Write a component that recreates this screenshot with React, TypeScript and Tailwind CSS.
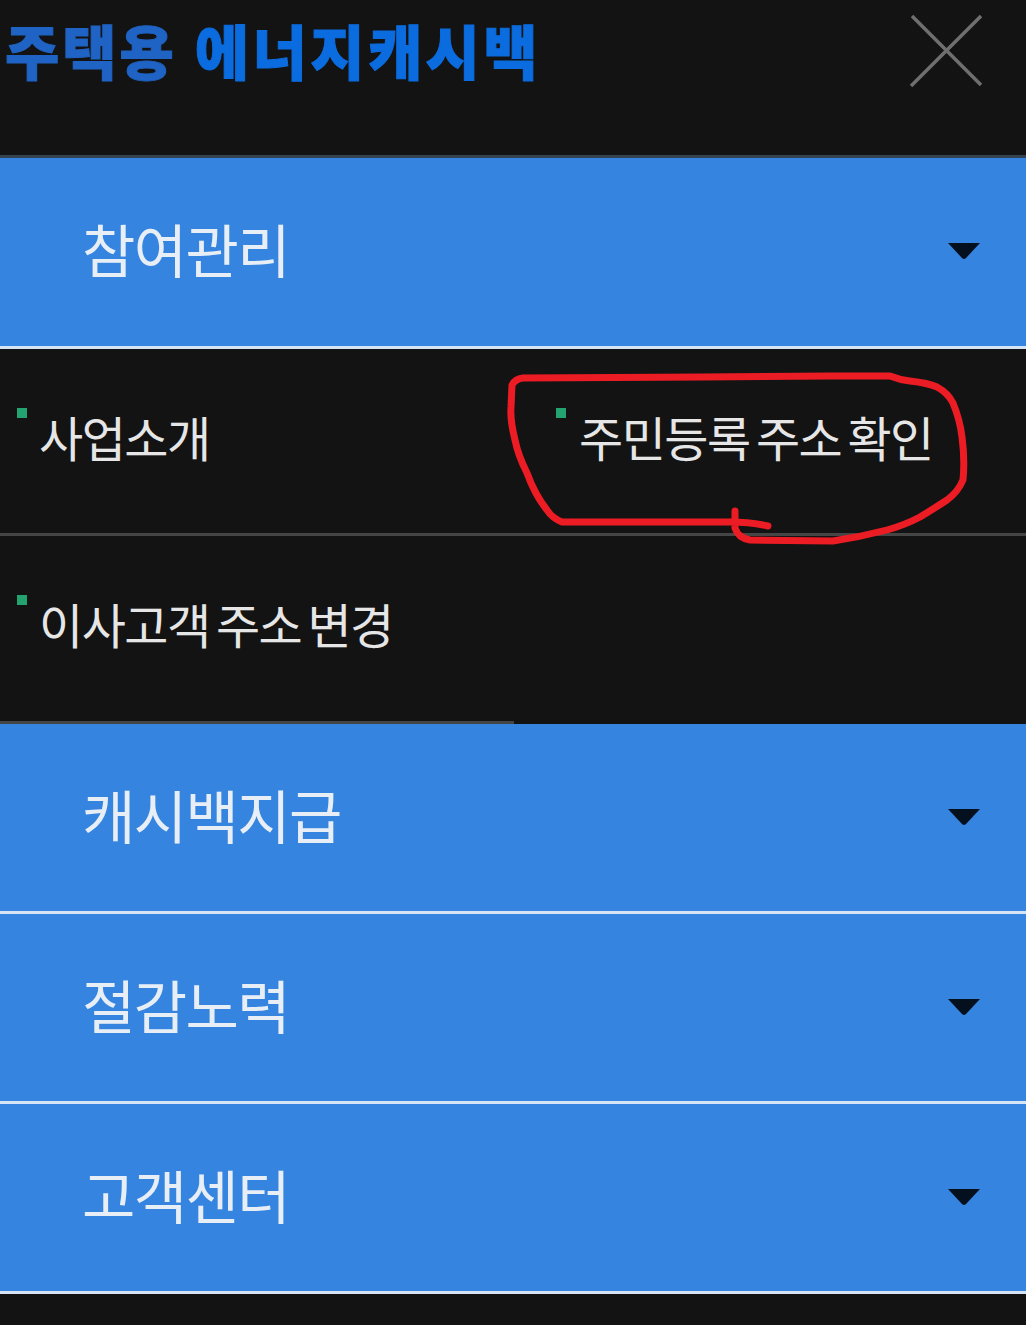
const KR = "font-['Noto_Sans_CJK_KR',sans-serif]"

const BlueRow = ({ label, first }: { label: string; first?: boolean }) => (
  <div className={`${first ? 'h-[191px]' : 'h-[190px]'} bg-[#3584e0] border-b-[3px] border-[#d6e4f5] flex items-center justify-between pl-[82px] pr-[45px]`}>
    <span className="text-[58px] leading-none font-normal text-[#e8eef6] tracking-[-1.6px] -mt-[8px]">{label}</span>
    <svg width="34" height="18" viewBox="0 0 34 18" className="-mt-[2px]">
      <path d="M1 1H33L19 16Q17 18 15 16Z" fill="#05101f" />
    </svg>
  </div>
)

const SubItem = ({ label, right, tall }: { label: string; right?: boolean; tall?: boolean }) => (
  <div className={`relative ${tall ? 'h-[188px]' : 'h-[187px]'} ${right ? 'pl-[65px]' : 'pl-[39px]'} pt-[53px] border-b-[3px] border-[#454545]`}>
    <div className={`absolute ${right ? 'left-[42px]' : 'left-[17px]'} top-[59px] w-[10px] h-[10px] bg-[#23a36f]`} />
    <span className="text-[48px] leading-[68px] font-normal text-[#e6e6e6] tracking-[-1.5px] [word-spacing:-3px] whitespace-nowrap">{label}</span>
  </div>
)

export default function App() {
  return (
    <div className={`relative w-[1026px] h-[1325px] overflow-hidden bg-[#131313] ${KR}`}>
      <div className="h-[158px] border-b-[3px] border-[#35424f] flex justify-between pl-[5px] pr-[43px] pt-[10px]">
        <div className="text-[59px] leading-[80px] font-black whitespace-nowrap flex">
          <span className="text-[#1f63c4] [-webkit-text-stroke:1px_#1f63c4] tracking-[3px]">주택용</span>
          <span className="text-[#0b6cdf] [-webkit-text-stroke:1px_#0b6cdf] tracking-[3.4px] ml-[18px]">에너지캐시백</span>
        </div>
        <svg width="74" height="74" viewBox="0 0 74 74" className="mt-[4px]">
          <path d="M3 2L72 71M72 2L2 72" stroke="#6f6f6f" strokeWidth="3.5" />
        </svg>
      </div>

      <BlueRow label="참여관리" first />

      <div className="grid grid-cols-[514px_512px]">
        <SubItem label="사업소개" />
        <SubItem label="주민등록 주소 확인" right />
        <SubItem label="이사고객 주소 변경" tall />
        <div />
      </div>

      <BlueRow label="캐시백지급" />
      <BlueRow label="절감노력" />
      <BlueRow label="고객센터" />

      <svg className="absolute inset-0 pointer-events-none" width="1026" height="1325" viewBox="0 0 1026 1325" fill="none">
        <path
          d="M768 526 Q750 522 730 522 L562 522 Q552 518 547 510 Q535 495 527 473 Q518 455 515 440 Q510 420 511 407 L512 385 Q515 379 523 378 L703 377 L830 376 L890 376 Q900 380 910 381 Q928 383 937 387 Q948 393 953 403 Q960 420 962 437 Q965 460 963 480 Q958 492 947 500 Q935 508 920 517 Q905 525 887 530 Q860 537 833 541 L750 540 Q738 538 735 528 L735 511"
          stroke="#ec1c24"
          strokeWidth="7"
          strokeLinecap="round"
          strokeLinejoin="round"
        />
      </svg>
    </div>
  )
}
